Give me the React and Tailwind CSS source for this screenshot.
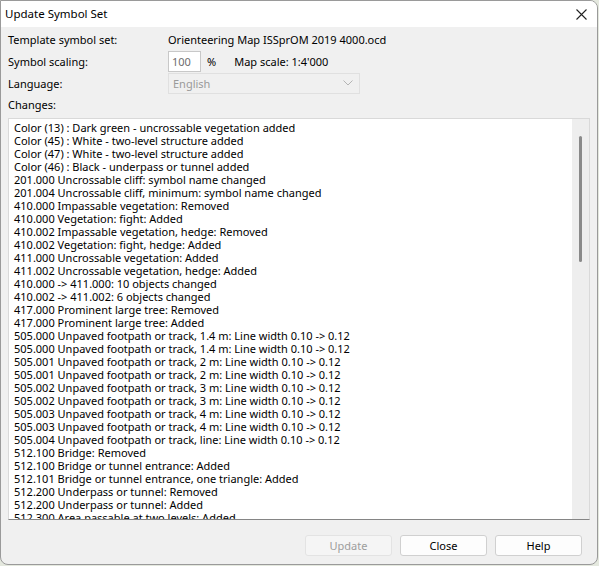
import React from 'react';

const changes = [
  'Color (13) : Dark green - uncrossable vegetation added',
  'Color (45) : White - two-level structure added',
  'Color (47) : White - two-level structure added',
  'Color (46) : Black - underpass or tunnel added',
  '201.000 Uncrossable cliff: symbol name changed',
  '201.004 Uncrossable cliff, minimum: symbol name changed',
  '410.000 Impassable vegetation: Removed',
  '410.000 Vegetation: fight: Added',
  '410.002 Impassable vegetation, hedge: Removed',
  '410.002 Vegetation: fight, hedge: Added',
  '411.000 Uncrossable vegetation: Added',
  '411.002 Uncrossable vegetation, hedge: Added',
  '410.000 -> 411.000: 10 objects changed',
  '410.002 -> 411.002: 6 objects changed',
  '417.000 Prominent large tree: Removed',
  '417.000 Prominent large tree: Added',
  '505.000 Unpaved footpath or track, 1.4 m: Line width 0.10 -> 0.12',
  '505.000 Unpaved footpath or track, 1.4 m: Line width 0.10 -> 0.12',
  '505.001 Unpaved footpath or track, 2 m: Line width 0.10 -> 0.12',
  '505.001 Unpaved footpath or track, 2 m: Line width 0.10 -> 0.12',
  '505.002 Unpaved footpath or track, 3 m: Line width 0.10 -> 0.12',
  '505.002 Unpaved footpath or track, 3 m: Line width 0.10 -> 0.12',
  '505.003 Unpaved footpath or track, 4 m: Line width 0.10 -> 0.12',
  '505.003 Unpaved footpath or track, 4 m: Line width 0.10 -> 0.12',
  '505.004 Unpaved footpath or track, line: Line width 0.10 -> 0.12',
  '512.100 Bridge: Removed',
  '512.100 Bridge or tunnel entrance: Added',
  '512.101 Bridge or tunnel entrance, one triangle: Added',
  '512.200 Underpass or tunnel: Removed',
  '512.200 Underpass or tunnel: Added',
  '512.300 Area passable at two levels: Added',
];

const font = { fontFamily: '"Noto Sans", "Open Sans", sans-serif' };

const Button = ({ children, disabled }) => (
  <button
    disabled={disabled}
    className={`w-[87px] h-[21px] rounded-[3px] border text-[11px] leading-none ${
      disabled
        ? 'bg-[#f5f5f5] border-[#e3e3e3] text-[#9d9d9d]'
        : 'bg-[#fdfdfd] border-[#d0d0d0] text-black'
    }`}
  >
    {children}
  </button>
);

export default function App() {
  return (
    <div className="w-[599px] h-[566px] bg-[#e4e8de] text-black" style={font}>
      <div className="w-[598px] h-[565px] bg-[#f0f0f0] border border-[#9a9a9a] rounded-r-[8px] rounded-bl-[8px] flex flex-col overflow-hidden">
        {/* title bar */}
        <div className="h-[26px] bg-white flex items-center justify-between pl-[4px] pr-[10px] shrink-0">
          <span className="text-[11.5px]">Update Symbol Set</span>
          <svg width="11" height="11" viewBox="0 0 11 11" className="mt-[1px]">
            <path d="M0.5 0.5 L10.5 10.5 M10.5 0.5 L0.5 10.5" stroke="#222" strokeWidth="1.1" />
          </svg>
        </div>

        {/* settings */}
        <div className="px-[7px] pt-[1px] grid grid-cols-[160px_1fr] text-[11px] leading-none">
          <div className="h-[22px] flex items-center">Template symbol set:</div>
          <div className="h-[22px] flex items-center">Orienteering Map ISSprOM 2019 4000.ocd</div>

          <div className="h-[22px] flex items-center">Symbol scaling:</div>
          <div className="h-[22px] flex items-center">
            <div className="w-[33px] h-[21px] bg-white border border-[#c8c8c8] flex items-center pl-[3px] text-[#6d6d6d]">100</div>
            <span className="ml-[6px]">%</span>
            <span className="ml-[18px]">Map scale: 1:4'000</span>
          </div>

          <div className="h-[22px] flex items-center">Language:</div>
          <div className="h-[22px] flex items-center">
            <div className="w-[192px] h-[21px] border border-[#e0e0e0] bg-[#f0f0f0] flex items-center justify-between pl-[4px] pr-[6px] text-[#9a9a9a]">
              English
              <svg width="10" height="6" viewBox="0 0 10 6">
                <path d="M0.5 0.5 L5 5 L9.5 0.5" fill="none" stroke="#b4b4b4" strokeWidth="1" />
              </svg>
            </div>
          </div>

          <div className="h-[20px] flex items-center col-span-2">Changes:</div>
        </div>

        {/* changes list */}
        <div className="mx-[7px] mt-[4px] h-[402px] bg-white border border-[#d9d9d9] border-b-[#858585] flex overflow-hidden">
          <div className="flex-1 pl-[5px] pt-[2px] text-[11px] leading-[13px] whitespace-nowrap overflow-hidden">
            {changes.map((line, i) => (
              <div key={i} className="h-[13px]">{line}</div>
            ))}
          </div>
          <div className="w-[17px] bg-[#eeeeee] flex justify-center pt-[17px]">
            <div className="w-[3px] h-[126px] rounded-full bg-[#8a8a8a]" />
          </div>
        </div>

        {/* buttons */}
        <div className="flex justify-end gap-[8px] pr-[15px] mt-[15px]">
          <Button disabled>Update</Button>
          <Button>Close</Button>
          <Button>Help</Button>
        </div>
      </div>
    </div>
  );
}
